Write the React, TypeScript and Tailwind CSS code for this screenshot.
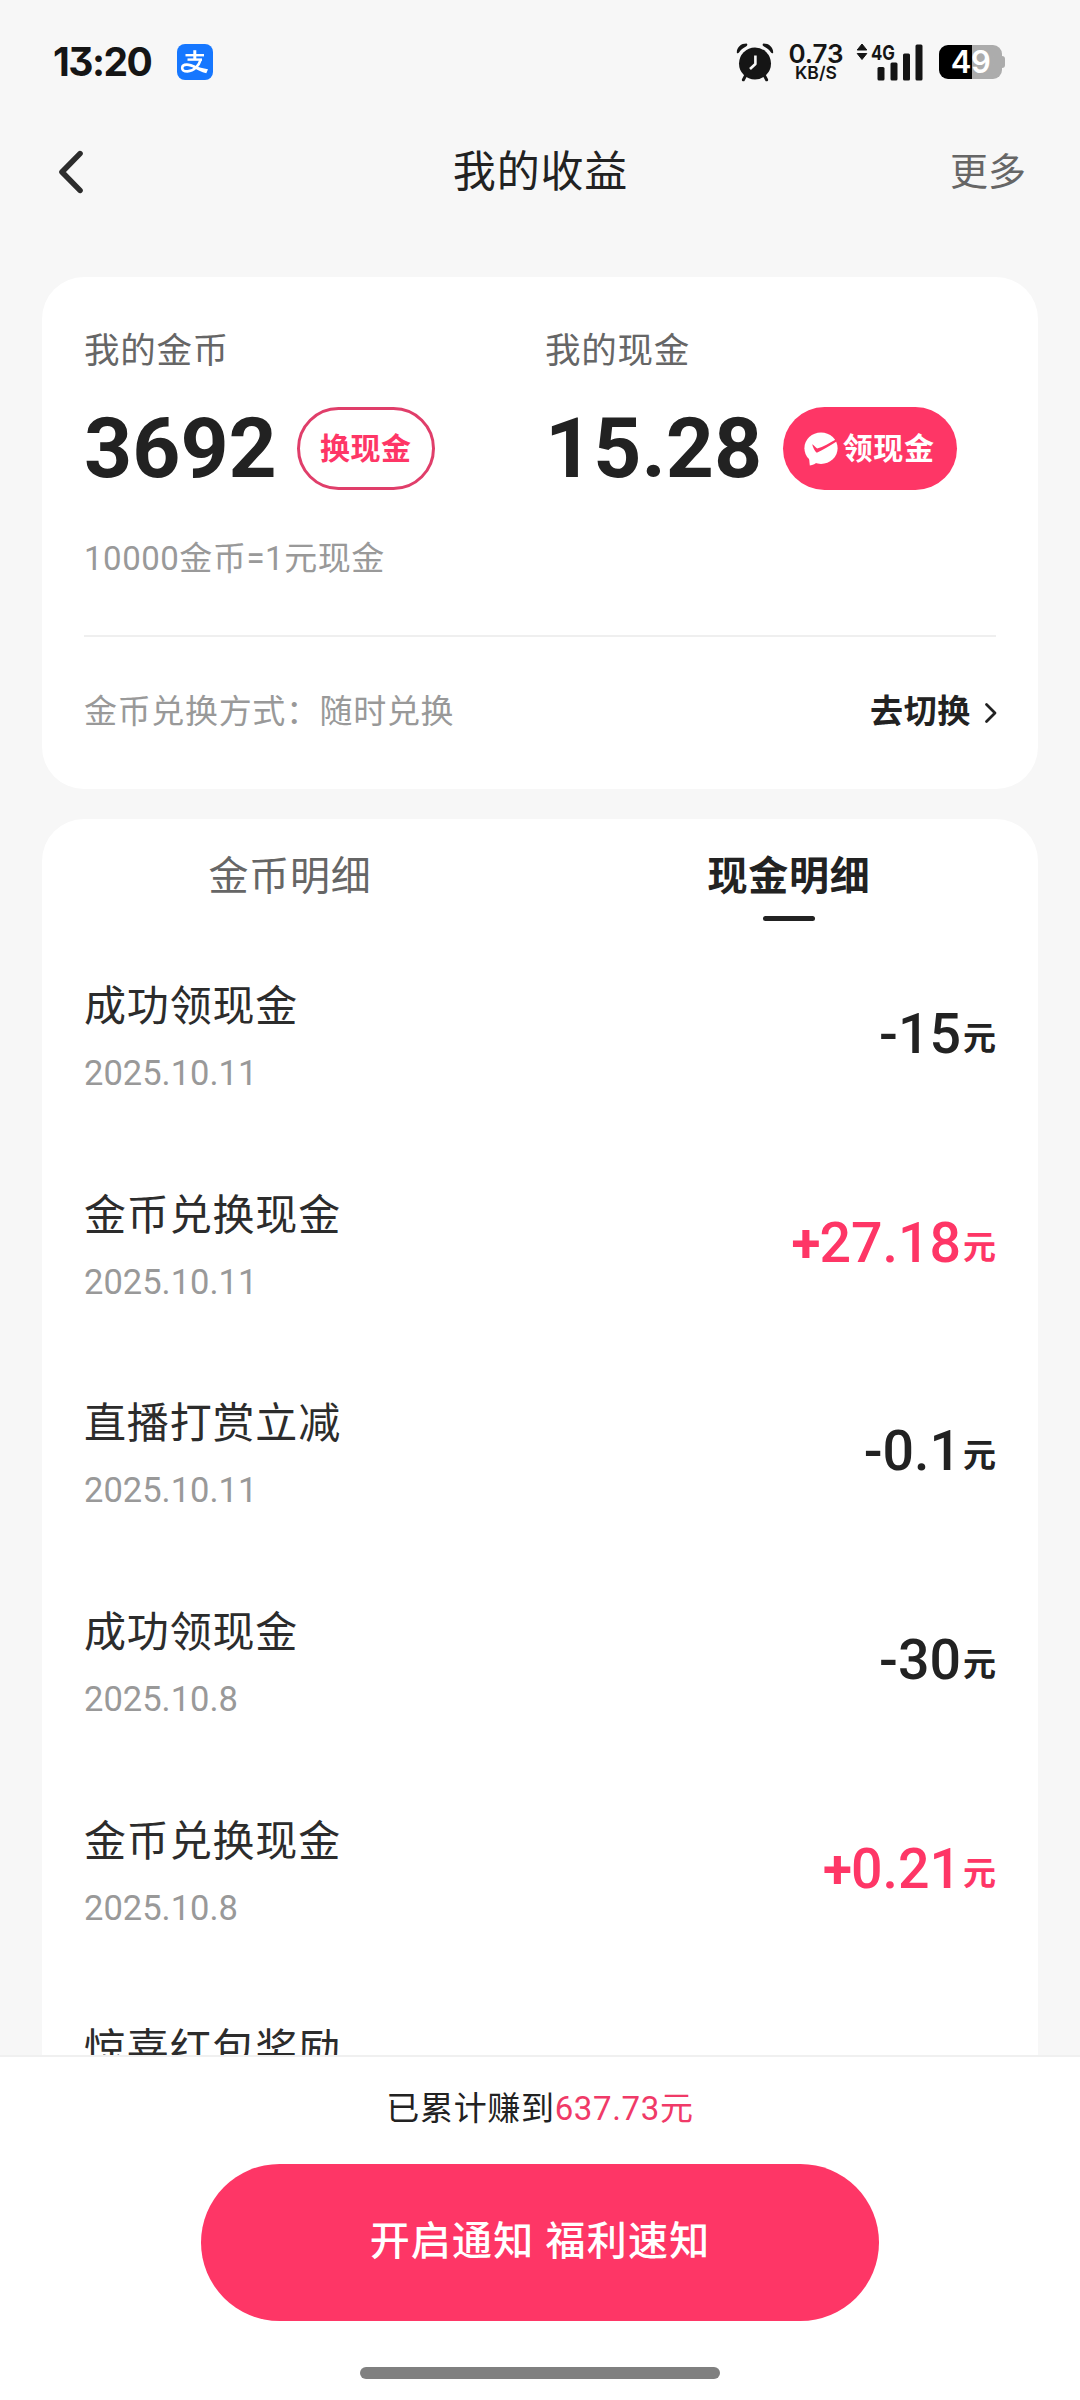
import React from "react";

const cjk = "font-['Roboto','Noto_Sans_CJK_SC',sans-serif]";

type Entry = { title: string; date: string; amount: string; gain?: boolean };

const entries: Entry[] = [
  { title: "成功领现金", date: "2025.10.11", amount: "-15" },
  { title: "金币兑换现金", date: "2025.10.11", amount: "27.18", gain: true },
  { title: "直播打赏立减", date: "2025.10.11", amount: "-0.1" },
  { title: "成功领现金", date: "2025.10.8", amount: "-30" },
  { title: "金币兑换现金", date: "2025.10.8", amount: "0.21", gain: true },
];

function AlipayIcon() {
  return (
    <svg viewBox="0 0 36 36" className="ml-[26px] size-9" fill="none" stroke="#fff">
      <rect width="36" height="36" rx="8" fill="#1677ff" stroke="none" />
      <path d="M8.5 11.2H27" strokeWidth="2.4" />
      <path d="M17.8 6.2V16" strokeWidth="3" />
      <path d="M10.5 15.6H25" strokeWidth="2.4" />
      <path d="M23.8 15.4C22 21.5 17 27.4 10.5 27.4C6.8 27.4 5.2 25.8 5.2 23.9C5.2 21.8 7 20.6 9.8 20.6C13 20.6 16 22 19 23.6" strokeWidth="2.6" />
      <path d="M17.5 21.6C21.5 23.4 26 24.6 31 25.2L29.3 29.3C24.5 28.2 20 25.8 16.2 23.6Z" fill="#fff" stroke="none" />
    </svg>
  );
}

function AlarmIcon() {
  return (
    <svg viewBox="0 0 38 40" className="h-10 w-[38px]" fill="none">
      <path d="M0.8 10.4C1 5 5 1.6 10.6 1.6C12 2.4 11.4 4 9.6 4.8C6.6 6.2 4.6 8.2 3 10.6C2.2 11.6 0.9 11.6 0.8 10.4Z" fill="#151515" />
      <path d="M37.2 10.4C37 5 33 1.6 27.4 1.6C26 2.4 26.6 4 28.4 4.8C31.4 6.2 33.4 8.2 35 10.6C35.8 11.6 37.1 11.6 37.2 10.4Z" fill="#151515" />
      <path d="M9.6 33.5L7.4 37.8M28.4 33.5L30.6 37.8" stroke="#151515" strokeWidth="3" strokeLinecap="round" />
      <circle cx="19" cy="21.5" r="16" fill="#151515" />
      <path d="M19.4 13.5V22L14 27" stroke="#f7f7f7" strokeWidth="2.6" strokeLinejoin="round" />
    </svg>
  );
}

function StatusBar() {
  return (
    <div className="flex h-[124px] items-center justify-between pr-[75px] pl-[53px] font-['Inter',sans-serif] text-[#151515]">
      <div className="flex items-center">
        <span className="w-[98px] text-[39px] leading-[48px] font-bold tracking-[-1.5px] whitespace-nowrap [font-feature-settings:'cv09']">13:20</span>
        <AlipayIcon />
      </div>
      <div className="flex items-center">
        <AlarmIcon />
        <div className="ml-[14px] flex w-[56px] flex-col items-center">
          <span className="text-[26px] leading-[22px] font-semibold">0.73</span>
          <span className="text-[17.5px] leading-[16px] font-semibold">KB/S</span>
        </div>
        <svg viewBox="0 0 67 38" className="ml-[12px] h-[38px] w-[67px] overflow-visible" fill="#151515">
          <path d="M1.2 7L6 1L10.8 7ZM1.2 10.5L6 16.5L10.8 10.5Z" stroke="#151515" strokeLinejoin="round" />
          <text x="15" y="16.8" fontSize="20" fontWeight="700" textLength="24" lengthAdjust="spacingAndGlyphs">4G</text>
          <rect x="21.5" y="24" width="7" height="13.5" rx="1.5" />
          <rect x="34.5" y="19.5" width="7" height="18" rx="1.5" />
          <rect x="47" y="10.5" width="7" height="27" rx="1.5" />
          <rect x="59.5" y="1.5" width="7" height="36" rx="1.5" />
        </svg>
        <div className="ml-[16px] flex items-center">
          <div className="flex h-[34px] w-[63px] items-center justify-center rounded-[9px] bg-linear-to-r from-black from-52% to-[#acacac] to-52%">
            <span className="text-[31px] leading-[34px] font-semibold tracking-[-0.5px] text-white">49</span>
          </div>
          <div className="h-3 w-[3px] rounded-r-[3px] bg-[#acacac]" />
        </div>
      </div>
    </div>
  );
}

function Header() {
  return (
    <header className="grid h-[96px] grid-cols-[1fr_auto_1fr] items-center pr-[54px] pl-[57px] text-[#222]">
      <svg viewBox="0 0 28 44" className="h-11 w-7" fill="none" stroke="#2c2c2c" strokeWidth="5.6" strokeLinecap="round" strokeLinejoin="round">
        <path d="M23 3.6L5 22L23 40.4" />
      </svg>
      <h1 className="-ml-[2px] text-center text-[43px] leading-[60px] tracking-[0.02em] whitespace-nowrap">我的收益</h1>
      <span className="text-right text-[38px] leading-[54px] text-[#666]">更多</span>
    </header>
  );
}

function BubbleCheck() {
  return (
    <svg viewBox="0 0 34 34" className="-ml-[2px] size-[34px]">
      <ellipse cx="17" cy="16.2" rx="16.6" ry="15.8" fill="#fff" />
      <path d="M5 25L5.8 33.5C9 33 11.5 31.5 14 30Z" fill="#fff" />
      <path d="M8.2 12.2C9.6 12.8 11.6 15.2 13.2 16.6C19 14.8 26 10.8 31.8 7.4L32.2 9.8C26 13.6 18.5 18.4 12.8 20.8C10.6 19 9 15.4 8.2 12.2Z" fill="#fe3666" />
    </svg>
  );
}

function Balance() {
  return (
    <section className="mx-[42px] h-[512px] rounded-[42px] bg-white px-[42px]">
      <div className="grid h-[360px] grid-cols-[461px_1fr] border-b-2 border-[#efefef]">
        <div className="pt-[50px]">
          <div className="text-[35.5px] leading-[48px] tracking-[0.02em] text-[#666]">我的金币</div>
          <div className="mt-[32px] flex h-[83px] items-center">
            <span className="text-[84px] leading-[84px] font-bold text-[#222]">3692</span>
            <span className="ml-[20px] flex h-[83px] w-[138px] items-center justify-center rounded-full border-3 border-[#e03e6a] text-[30px] font-bold tracking-[0.02em] text-[#fe3666]">换现金</span>
          </div>
          <div className="mt-[45px] text-[33px] leading-[48px] tracking-[0.016em] text-[#999]">10000金币=1元现金</div>
        </div>
        <div className="pt-[50px]">
          <div className="text-[35.5px] leading-[48px] tracking-[0.02em] text-[#666]">我的现金</div>
          <div className="mt-[32px] flex h-[83px] items-center">
            <span className="text-[84px] leading-[84px] font-bold text-[#222]">15.28</span>
            <span className="ml-[21px] flex h-[83px] w-[174px] items-center justify-center gap-[5px] rounded-full bg-[#fe3666] text-[30px] font-bold tracking-[0.02em] text-white">
              <BubbleCheck />
              领现金
            </span>
          </div>
        </div>
      </div>
      <div className="flex h-[149px] items-center justify-between">
        <span className="text-[33px] tracking-[0.02em] text-[#999]">金币兑换方式：随时兑换</span>
        <span className="-mr-[2px] flex items-center text-[33px] font-bold tracking-[0.02em] text-[#222]">
          去切换
          <svg viewBox="0 0 14 22" className="mt-[3px] ml-[13px] h-[22px] w-[14px]" fill="none" stroke="#222" strokeWidth="2.8" strokeLinecap="round" strokeLinejoin="round">
            <path d="M2.5 2.5L11 11L2.5 19.5" />
          </svg>
        </span>
      </div>
    </section>
  );
}

function Row({ entry }: { entry: Entry }) {
  return (
    <li className="flex h-[208.7px] shrink-0 justify-between">
      <div className="flex flex-col">
        <span className="text-[42px] leading-[62px] tracking-[0.02em] text-[#2c2c2c]">{entry.title}</span>
        <span className="mt-[11px] text-[34.5px] leading-[48px] text-[#999]">{entry.date}</span>
      </div>
      <div className={entry.gain ? "flex h-[116px] items-baseline pt-[23px] text-[#fe3666]" : "flex h-[116px] items-baseline pt-[23px] text-[#222]"}>
        {entry.gain && <span className="-mr-[1px] text-[53px] leading-[72px] font-bold">+</span>}
        <span className="text-[55.5px] leading-[72px] font-medium">{entry.amount}</span>
        <span className="ml-[2px] -translate-y-[3px] text-[33px] font-bold">元</span>
      </div>
    </li>
  );
}

function Ledger() {
  return (
    <section className="mx-[42px] mt-[30px] min-h-0 flex-1 overflow-hidden rounded-t-[42px] bg-white">
      <div className="grid h-[157px] grid-cols-2 text-[40px] tracking-[0.02em]">
        <div className="flex flex-col items-center pt-[28px] pr-[2px] leading-[60px] text-[#666]">金币明细</div>
        <div className="flex flex-col items-center pt-[28px] leading-[60px] font-bold text-[#222]">
          现金明细
          <span className="mt-[9px] h-[5px] w-[52px] rounded-[2.5px] bg-[#222]" />
        </div>
      </div>
      <ul className="flex flex-col px-[42px]">
        {entries.map((entry, i) => (
          <Row key={i} entry={entry} />
        ))}
        <li className="text-[42px] leading-[62px] tracking-[0.02em] text-[#2c2c2c]">惊喜红包奖励</li>
      </ul>
    </section>
  );
}

function Footer() {
  return (
    <footer className="flex h-[345px] flex-col items-center border-t-2 border-[#f0f0f0] bg-white">
      <p className="mt-[28px] text-[33px] leading-[48px] tracking-[0.02em] text-[#222]">
        已累计赚到<span className="text-[#f03a68]">637.73元</span>
      </p>
      <button className="mt-[31px] h-[157px] w-[678px] rounded-full bg-[#fe3666] pb-[2px] text-[40px] font-medium tracking-[0.03em] text-white">
        开启通知 福利速知
      </button>
      <div className="mt-[46px] h-3 w-[360px] rounded-full bg-[#808080]" />
    </footer>
  );
}

export default function App() {
  return (
    <main className={`flex h-[2400px] w-[1080px] flex-col overflow-hidden bg-[#f7f7f7] ${cjk}`}>
      <StatusBar />
      <Header />
      <div className="h-[57px] shrink-0" />
      <Balance />
      <Ledger />
      <Footer />
    </main>
  );
}
